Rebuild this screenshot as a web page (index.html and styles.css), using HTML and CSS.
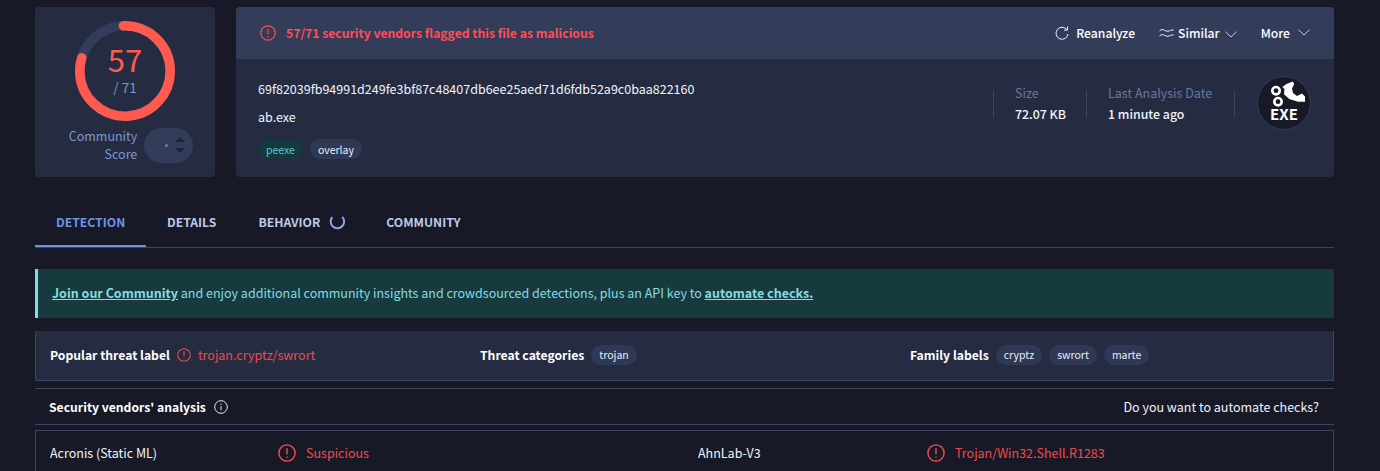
FILE: index.html
```html
<!DOCTYPE html>
<html lang="en">
<head>
<meta charset="utf-8">
<title>VirusTotal - ab.exe</title>
<link rel="stylesheet" href="styles.css">
</head>
<body>
<main class="page">
  <section class="top">
    <div class="score-card">
      <div class="ring">
        <svg class="ring-svg" viewBox="0 0 100 100" width="100" height="100">
          <circle class="ring-track" cx="50" cy="50" r="45.2"/>
          <circle class="ring-value" cx="50" cy="50" r="45.2" pathLength="71" stroke-dasharray="57 71" transform="rotate(-92 50 50)"/>
        </svg>
        <div class="ring-text">
          <div class="ring-num">57</div>
          <div class="ring-total">/ 71</div>
        </div>
      </div>
      <div class="community">
        <div class="community-label">Community<br>Score</div>
        <div class="community-pill">
          <span class="dot"></span>
          <span class="arrows"><i class="arrow-up"></i><i class="arrow-down"></i></span>
        </div>
      </div>
    </div>
    <div class="file-card">
      <header class="file-head">
        <div class="alert">
          <svg class="icon-alert" viewBox="0 0 16 16" width="16" height="16"><circle cx="8" cy="8" r="7.2"/><path d="M8 3.800v5.200M8 11v1.200"/></svg>
          <span>57/71 security vendors flagged this file as malicious</span>
        </div>
        <div class="actions">
          <span class="action act-re">
            <svg class="icon-line" viewBox="0 0 14 14" width="14" height="14"><path d="M11.800 3.600A6 6 0 1 0 13 8"/><path d="M12.500 0.500v3.600H9"/></svg>
            Reanalyze
          </span>
          <span class="action act-sim">
            <svg class="icon-line" viewBox="0 0 15 10" width="15" height="10"><path d="M0.500 3c2-2 3.500-1.500 5-.7s3.500 1.300 4.500.7 2-1 4.500-1"/><path d="M0.500 8c2-2 3.500-1.500 5-.7s3.500 1.300 4.500.7 2-1 4.500-1"/></svg>
            <span class="sim-label">Similar</span>
            <svg class="icon-line chev" viewBox="0 0 12 7" width="12" height="7"><path d="M0.500 0.800 6 6l5.500-5.200"/></svg>
          </span>
          <span class="action act-more">
            More
            <svg class="icon-line chev chev-up" viewBox="0 0 12 7" width="12" height="7"><path d="M0.500 0.800 6 6l5.500-5.200"/></svg>
          </span>
        </div>
      </header>
      <div class="file-body">
        <div class="file-info">
          <div class="hash">69f82039fb94991d249fe3bf87c48407db6ee25aed71d6fdb52a9c0baa822160</div>
          <div class="fname">ab.exe</div>
          <div class="tags">
            <span class="pill pill-teal">peexe</span>
            <span class="pill">overlay</span>
          </div>
        </div>
        <div class="meta">
          <div class="meta-item m-size"><div class="meta-label">Size</div><div class="meta-value">72.07 KB</div></div>
          <div class="meta-item m-date"><div class="meta-label">Last Analysis Date</div><div class="meta-value">1 minute ago</div></div>
          <div class="meta-rule"></div>
          <div class="exe">
            <svg viewBox="0 0 54 54" width="54" height="54">
              <circle class="exe-bg" cx="27" cy="27" r="26.500"/>
              <circle class="exe-gear" cx="19" cy="14.700" r="3.700"/>
              <circle class="exe-gear" cx="21" cy="25.700" r="3.700"/>
              <path class="exe-wrench" d="M29.500 8l6.200-2.500 1.500 2.500-2.200 4.500 1 4.500 4 3 5-2.500 3 3v5.200H41l-8.700-2.700-5.300-4.700.5-5.300-2.200-2z"/>
              <text class="exe-text" x="27" y="43.500" text-anchor="middle">EXE</text>
            </svg>
          </div>
        </div>
      </div>
    </div>
  </section>

  <nav class="tabs">
    <span class="tab tab-active">DETECTION</span>
    <span class="tab">DETAILS</span>
    <span class="tab tab-beh">BEHAVIOR <svg class="spin" viewBox="0 0 16 16" width="16" height="16"><path d="M3.300 3.200a6.700 6.700 0 1 0 9.900-.3"/></svg></span>
    <span class="tab">COMMUNITY</span>
  </nav>

  <div class="banner"><a class="banner-link">Join our Community</a> and enjoy additional community insights and crowdsourced detections, plus an API key to <a class="banner-link">automate checks.</a></div>

  <div class="threat">
    <div class="threat-col tc1">
      <b>Popular threat label</b>
      <svg class="icon-alert small" viewBox="0 0 16 16" width="14" height="14"><circle cx="8" cy="8" r="7.200"/><path d="M8 3.800v5.200M8 11v1.200"/></svg>
      <span class="red">trojan.cryptz/swrort</span>
    </div>
    <div class="threat-col tc2"><b>Threat categories</b><span class="pill">trojan</span></div>
    <div class="threat-col tc3"><b>Family labels</b><span class="pill">cryptz</span><span class="pill">swrort</span><span class="pill">marte</span></div>
  </div>

  <div class="section-head">
    <div class="section-title">
      <b>Security vendors' analysis</b>
      <svg class="icon-info" viewBox="0 0 14 14" width="14" height="14"><circle cx="7" cy="7" r="6.300"/><path d="M7 6.200v4M7 3.700v1.200"/></svg>
    </div>
    <div class="automate">Do you want to automate checks?</div>
  </div>

  <div class="row">
    <div class="vendor v1">Acronis (Static ML)</div>
    <div class="verdict vd1"><svg class="icon-alert big" viewBox="0 0 16 16" width="18" height="18"><circle cx="8" cy="8" r="7.200"/><path d="M8 3.800v5.200M8 11v1.200"/></svg><span>Suspicious</span></div>
    <div class="vendor v2">AhnLab-V3</div>
    <div class="verdict"><svg class="icon-alert big" viewBox="0 0 16 16" width="18" height="18"><circle cx="8" cy="8" r="7.200"/><path d="M8 3.800v5.200M8 11v1.200"/></svg><span>Trojan/Win32.Shell.R1283</span></div>
  </div>
</main>
</body>
</html>
```
FILE: styles.css
```css
* { box-sizing: border-box; }
html, body { margin: 0; height: 471px; overflow: hidden; background: #181926; }
body { font-family: "Noto Sans CJK JP", "Noto Sans", sans-serif; font-size: 12.500px; color: #f0f3fb; }
.page { width: 1299px; margin-left: 35px; padding-top: 7px; }
b { font-weight: 700; font-size: 12.200px; }

.top { display: flex; gap: 21px; height: 170px; }
.score-card { width: 180px; background: #252c42; border-radius: 4px; padding-top: 14px; display: flex; flex-direction: column; align-items: center; }
.ring { position: relative; width: 100px; height: 100px; }
.ring-svg { display: block; }
.ring-track, .ring-value { fill: none; stroke-width: 9.600; }
.ring-track { stroke: #333d5a; }
.ring-value { stroke: #ff5a50; stroke-linecap: round; }
.ring-text { position: absolute; inset: 0; display: flex; flex-direction: column; align-items: center; }
.ring-num { font-size: 31px; line-height: 30px; margin-top: 23px; color: #ff5a50; }
.ring-total { font-size: 13.500px; line-height: 20px; margin-top: 3px; color: #7c97cd; }
.community { display: flex; align-items: center; gap: 7px; margin-top: 6px; margin-left: 12px; }
.community-label { text-align: right; font-size: 12.500px; line-height: 18px; color: #7c97cd; }
.community-pill { width: 49px; height: 35px; border-radius: 18px; background: #333d5a; display: flex; align-items: center; justify-content: flex-end; gap: 7px; padding-right: 8px; }
.dot { width: 3px; height: 3px; border-radius: 50%; background: #6f7f9f; }
.arrows { display: flex; flex-direction: column; gap: 6px; }
.arrow-up, .arrow-down { display: block; width: 0; height: 0; border-left: 5px solid transparent; border-right: 5px solid transparent; }
.arrow-up { border-bottom: 5px solid #1f2538; }
.arrow-down { border-top: 5px solid #1f2538; }

.file-card { flex: 1; background: #252c42; border-radius: 4px; overflow: hidden; }
.file-head { height: 52px; background: #333d5a; display: flex; align-items: center; justify-content: space-between; padding: 0 24px; }
.alert { display: flex; align-items: center; gap: 10px; color: #ff4d55; font-size: 12.200px; font-weight: 700; }
.icon-alert { fill: none; stroke: #ff4d55; stroke-width: 1.200; display: block; flex: none; }
.icon-alert.small { stroke: #f04a4a; }
.actions { display: flex; align-items: center; gap: 24px; font-size: 12.200px; font-weight: 500; color: #fff; }
.action { display: flex; align-items: center; }
.act-re { gap: 7px; }
.act-sim { gap: 4px; }
.sim-label { margin-right: 1px; }
.act-more { gap: 8px; }
.icon-line { fill: none; stroke: #f0f3fb; stroke-width: 1; display: block; }
.chev { stroke: #c4cde0; margin-top: 2px; }
.chev-up { margin-top: -2px; }

.file-body { display: flex; justify-content: space-between; padding: 0 23px 0 22px; }
.file-info { padding-top: 19px; }
.hash { font-size: 12.500px; line-height: 22px; }
.fname { font-size: 12.500px; line-height: 20px; margin-top: 7px; }
.tags { display: flex; gap: 7px; margin-top: 12px; }
.pill { display: inline-flex; align-items: center; height: 20px; padding: 0 8px; border-radius: 10px; background: #2f3854; font-size: 10.500px; color: #e8edf8; }
.pill-teal { background: #143a3d; color: #58c7cc; }

.meta { display: flex; align-items: flex-start; padding-top: 31px; }
.meta-item { height: 28px; border-left: 1px solid #3a4562; padding-left: 21px; }
.m-size { width: 93px; }
.m-date { width: 148px; }
.meta-label { font-size: 12.500px; line-height: 13px; margin-top: -4px; color: #66789f; }
.meta-value { font-size: 12.350px; line-height: 20px; margin-top: 5px; font-weight: 500; }
.meta-rule { width: 1px; height: 28px; background: #3a4562; }
.exe { margin-left: 22px; margin-top: -14px; }
.exe svg { display: block; }
.exe-bg { fill: #181926; stroke: #333d5a; stroke-width: 1; }
.exe-gear { fill: none; stroke: #fff; stroke-width: 2.600; }
.exe-wrench { fill: #fff; }
.exe-text { font-size: 15px; font-weight: 700; fill: #fff; }

.tabs { display: flex; height: 48px; margin-top: 23px; border-bottom: 1px solid #3d4660; font-size: 12.200px; font-weight: 700; color: #bcc9e6; }
.tab { display: flex; align-items: center; padding: 0 21px 4px; height: 47px; }
.tab-active { width: 111px; color: #6e93ea; box-shadow: inset 0 -2px 0 #6e93ea; }
.tab-beh { gap: 9px; padding-right: 20px; }
.spin { fill: none; stroke: #8ea6e0; stroke-width: 2; }

.banner { height: 49px; margin-top: 21px; background: #173a3e; border-left: 3px solid #85dce0; padding-left: 14px; font-size: 12.500px; color: #85dce0; line-height: 48px; }
.banner-link { font-weight: 700; text-decoration: underline; }

.threat { display: flex; align-items: center; height: 50px; margin-top: 13px; padding-bottom: 2px; background: #252c42; border-left: 1px solid #3d4660; border-right: 1px solid #3d4660; border-bottom: 1px solid #3d4660; }
.threat-col { display: flex; align-items: center; gap: 7px; }
.threat-col b { color: #fff; }
.tc1 { width: 430px; padding-left: 14px; }
.tc2 { width: 431px; padding-left: 14px; }
.tc3 { flex: 1; padding-left: 13px; }
.red { color: #f04a4a; font-size: 12.500px; }

.section-head { display: flex; justify-content: space-between; align-items: center; height: 37px; margin-top: 7px; border-top: 1px solid #3d4660; border-bottom: 1px solid #3d4660; padding: 0 15px 0 14px; }
.section-title { display: flex; align-items: center; gap: 8px; }
.section-title b { color: #fff; }
.icon-info { fill: none; stroke: #e8edf8; stroke-width: 1; display: block; }

.row { display: flex; align-items: center; height: 47px; margin-top: 5px; padding: 0 14px 2px; border: 1px solid #3d4660; }
.vendor { font-size: 12.500px; }
.v1 { width: 228px; }
.vd1 { width: 420px; }
.v2 { width: 229px; }
.verdict { display: flex; align-items: center; gap: 10px; color: #f04a4a; font-size: 12.500px; }
```
